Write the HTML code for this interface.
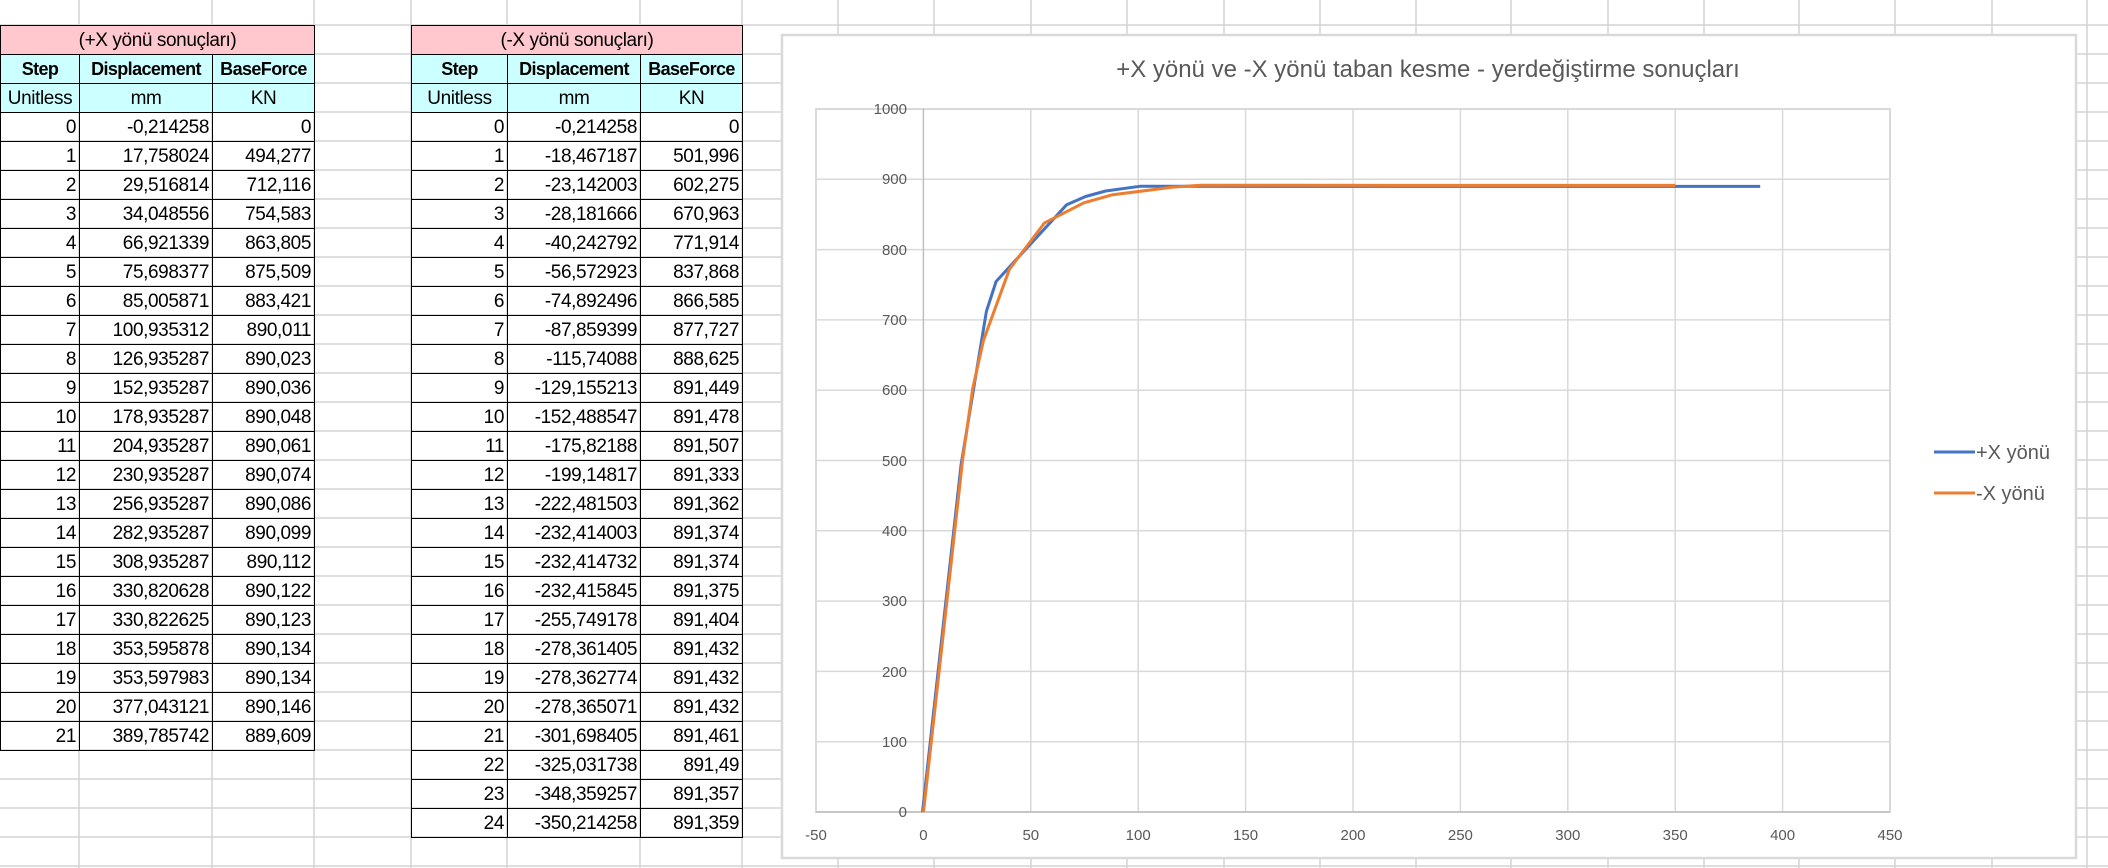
<!DOCTYPE html>
<html><head><meta charset="utf-8"><style>
*{margin:0;padding:0;box-sizing:border-box}
body{width:2108px;height:868px;overflow:hidden;background:#fff;position:relative;font-family:"Liberation Sans",sans-serif}
table{position:absolute;top:25px;border-collapse:collapse;table-layout:fixed}
td{height:29px;border:1px solid #000;font-size:19px;letter-spacing:-0.4px;line-height:27px;text-align:right;padding:0 3px;white-space:nowrap;overflow:hidden;color:#000}
tr.h td{text-align:center;background:#ccffff}
tr.t td{text-align:center;background:#ffc7ce}
tr.b td{font-weight:bold;font-size:18px;letter-spacing:-0.6px;padding:0 1px}
</style></head><body>
<svg width="2108" height="868" style="position:absolute;left:0;top:0">
<g stroke="#d4d4d4" stroke-width="1.5">
<line x1="79" y1="0" x2="79" y2="868"/><line x1="212" y1="0" x2="212" y2="868"/><line x1="314" y1="0" x2="314" y2="868"/><line x1="411" y1="0" x2="411" y2="868"/><line x1="507" y1="0" x2="507" y2="868"/><line x1="640" y1="0" x2="640" y2="868"/><line x1="742" y1="0" x2="742" y2="868"/>
<line x1="838" y1="0" x2="838" y2="868"/><line x1="934" y1="0" x2="934" y2="868"/><line x1="1031" y1="0" x2="1031" y2="868"/><line x1="1127" y1="0" x2="1127" y2="868"/><line x1="1224" y1="0" x2="1224" y2="868"/><line x1="1320" y1="0" x2="1320" y2="868"/><line x1="1416" y1="0" x2="1416" y2="868"/><line x1="1511" y1="0" x2="1511" y2="868"/><line x1="1608" y1="0" x2="1608" y2="868"/><line x1="1704" y1="0" x2="1704" y2="868"/><line x1="1799" y1="0" x2="1799" y2="868"/><line x1="1895" y1="0" x2="1895" y2="868"/><line x1="1992" y1="0" x2="1992" y2="868"/><line x1="2087" y1="0" x2="2087" y2="868"/>
<line x1="0" y1="25" x2="2108" y2="25"/><line x1="0" y1="54" x2="2108" y2="54"/><line x1="0" y1="83" x2="2108" y2="83"/><line x1="0" y1="112" x2="2108" y2="112"/><line x1="0" y1="141" x2="2108" y2="141"/><line x1="0" y1="170" x2="2108" y2="170"/><line x1="0" y1="199" x2="2108" y2="199"/><line x1="0" y1="228" x2="2108" y2="228"/><line x1="0" y1="257" x2="2108" y2="257"/><line x1="0" y1="286" x2="2108" y2="286"/><line x1="0" y1="315" x2="2108" y2="315"/><line x1="0" y1="344" x2="2108" y2="344"/><line x1="0" y1="373" x2="2108" y2="373"/><line x1="0" y1="402" x2="2108" y2="402"/><line x1="0" y1="431" x2="2108" y2="431"/><line x1="0" y1="460" x2="2108" y2="460"/><line x1="0" y1="489" x2="2108" y2="489"/><line x1="0" y1="518" x2="2108" y2="518"/><line x1="0" y1="547" x2="2108" y2="547"/><line x1="0" y1="576" x2="2108" y2="576"/><line x1="0" y1="605" x2="2108" y2="605"/><line x1="0" y1="634" x2="2108" y2="634"/><line x1="0" y1="663" x2="2108" y2="663"/><line x1="0" y1="692" x2="2108" y2="692"/><line x1="0" y1="721" x2="2108" y2="721"/><line x1="0" y1="750" x2="2108" y2="750"/><line x1="0" y1="779" x2="2108" y2="779"/><line x1="0" y1="808" x2="2108" y2="808"/><line x1="0" y1="837" x2="2108" y2="837"/><line x1="0" y1="866" x2="2108" y2="866"/>
</g>
<rect x="782" y="35" width="1294" height="823" fill="#fff" stroke="#d9d9d9" stroke-width="2.5"/>
<text x="1428" y="77" text-anchor="middle" font-family="Liberation Sans, sans-serif" font-size="24" fill="#595959">+X yönü ve -X yönü taban kesme - yerdeğiştirme sonuçları</text>
<g stroke="#d9d9d9" stroke-width="1.5">
<line x1="1030.8" y1="109" x2="1030.8" y2="812"/><line x1="1138.2" y1="109" x2="1138.2" y2="812"/><line x1="1245.6" y1="109" x2="1245.6" y2="812"/><line x1="1353" y1="109" x2="1353" y2="812"/><line x1="1460.4" y1="109" x2="1460.4" y2="812"/><line x1="1567.8" y1="109" x2="1567.8" y2="812"/><line x1="1675.2" y1="109" x2="1675.2" y2="812"/><line x1="1782.6" y1="109" x2="1782.6" y2="812"/>
<line x1="816" y1="179.3" x2="1890" y2="179.3"/><line x1="816" y1="249.6" x2="1890" y2="249.6"/><line x1="816" y1="319.9" x2="1890" y2="319.9"/><line x1="816" y1="390.2" x2="1890" y2="390.2"/><line x1="816" y1="460.5" x2="1890" y2="460.5"/><line x1="816" y1="530.8" x2="1890" y2="530.8"/><line x1="816" y1="601.1" x2="1890" y2="601.1"/><line x1="816" y1="671.4" x2="1890" y2="671.4"/><line x1="816" y1="741.7" x2="1890" y2="741.7"/>
<rect x="816" y="109" width="1074" height="703" fill="none" stroke-width="2"/>
</g>
<line x1="923.4" y1="109" x2="923.4" y2="812" stroke="#bfbfbf" stroke-width="1.5"/>
<line x1="816" y1="812" x2="1890" y2="812" stroke="#bfbfbf" stroke-width="1.5"/>
<g font-family="Liberation Sans, sans-serif" font-size="15" fill="#595959" text-anchor="end">
<text x="907" y="114">1000</text><text x="907" y="184">900</text><text x="907" y="255">800</text><text x="907" y="325">700</text><text x="907" y="395">600</text><text x="907" y="466">500</text><text x="907" y="536">400</text><text x="907" y="606">300</text><text x="907" y="677">200</text><text x="907" y="747">100</text><text x="907" y="817">0</text>
</g>
<g font-family="Liberation Sans, sans-serif" font-size="15" fill="#595959" text-anchor="middle">
<text x="816" y="840">-50</text><text x="923.4" y="840">0</text><text x="1030.8" y="840">50</text><text x="1138.2" y="840">100</text><text x="1245.6" y="840">150</text><text x="1353" y="840">200</text><text x="1460.4" y="840">250</text><text x="1567.8" y="840">300</text><text x="1675.2" y="840">350</text><text x="1782.6" y="840">400</text><text x="1890" y="840">450</text>
</g>
<polyline fill="none" stroke="#4472c4" stroke-width="3" stroke-linejoin="round" points="922.5,812 961.1,464.5 986.4,311.4 996.1,281.5 1066.7,204.7 1085.6,196.5 1105.6,191 1139.8,186.3 1760.2,186.4"/>
<polyline fill="none" stroke="#ed7d31" stroke-width="3" stroke-linejoin="round" points="923.5,812 962.7,459.1 972.7,388.6 983.5,340.3 1009.4,269.3 1044.5,222.9 1083.9,202.8 1111.7,194.9 1171.6,187.3 1200.4,185.3 1300.7,185.3 1675.2,185.4"/>
<line x1="1934" y1="452" x2="1975" y2="452" stroke="#4472c4" stroke-width="3"/>
<line x1="1934" y1="493" x2="1975" y2="493" stroke="#ed7d31" stroke-width="3"/>
<g font-family="Liberation Sans, sans-serif" font-size="20" fill="#595959">
<text x="1976" y="459">+X yönü</text><text x="1976" y="500">-X yönü</text>
</g>
</svg>

<table style="left:0;width:314px">
<colgroup><col style="width:79px"><col style="width:133px"><col style="width:102px"></colgroup>
<tr class="t"><td colspan="3">(+X yönü sonuçları)</td></tr>
<tr class="h b"><td>Step</td><td>Displacement</td><td>BaseForce</td></tr>
<tr class="h"><td>Unitless</td><td>mm</td><td>KN</td></tr>
<tr><td>0</td><td>-0,214258</td><td>0</td></tr>
<tr><td>1</td><td>17,758024</td><td>494,277</td></tr>
<tr><td>2</td><td>29,516814</td><td>712,116</td></tr>
<tr><td>3</td><td>34,048556</td><td>754,583</td></tr>
<tr><td>4</td><td>66,921339</td><td>863,805</td></tr>
<tr><td>5</td><td>75,698377</td><td>875,509</td></tr>
<tr><td>6</td><td>85,005871</td><td>883,421</td></tr>
<tr><td>7</td><td>100,935312</td><td>890,011</td></tr>
<tr><td>8</td><td>126,935287</td><td>890,023</td></tr>
<tr><td>9</td><td>152,935287</td><td>890,036</td></tr>
<tr><td>10</td><td>178,935287</td><td>890,048</td></tr>
<tr><td>11</td><td>204,935287</td><td>890,061</td></tr>
<tr><td>12</td><td>230,935287</td><td>890,074</td></tr>
<tr><td>13</td><td>256,935287</td><td>890,086</td></tr>
<tr><td>14</td><td>282,935287</td><td>890,099</td></tr>
<tr><td>15</td><td>308,935287</td><td>890,112</td></tr>
<tr><td>16</td><td>330,820628</td><td>890,122</td></tr>
<tr><td>17</td><td>330,822625</td><td>890,123</td></tr>
<tr><td>18</td><td>353,595878</td><td>890,134</td></tr>
<tr><td>19</td><td>353,597983</td><td>890,134</td></tr>
<tr><td>20</td><td>377,043121</td><td>890,146</td></tr>
<tr><td>21</td><td>389,785742</td><td>889,609</td></tr>
</table>

<table style="left:411px;width:331px">
<colgroup><col style="width:96px"><col style="width:133px"><col style="width:102px"></colgroup>
<tr class="t"><td colspan="3">(-X yönü sonuçları)</td></tr>
<tr class="h b"><td>Step</td><td>Displacement</td><td>BaseForce</td></tr>
<tr class="h"><td>Unitless</td><td>mm</td><td>KN</td></tr>
<tr><td>0</td><td>-0,214258</td><td>0</td></tr>
<tr><td>1</td><td>-18,467187</td><td>501,996</td></tr>
<tr><td>2</td><td>-23,142003</td><td>602,275</td></tr>
<tr><td>3</td><td>-28,181666</td><td>670,963</td></tr>
<tr><td>4</td><td>-40,242792</td><td>771,914</td></tr>
<tr><td>5</td><td>-56,572923</td><td>837,868</td></tr>
<tr><td>6</td><td>-74,892496</td><td>866,585</td></tr>
<tr><td>7</td><td>-87,859399</td><td>877,727</td></tr>
<tr><td>8</td><td>-115,74088</td><td>888,625</td></tr>
<tr><td>9</td><td>-129,155213</td><td>891,449</td></tr>
<tr><td>10</td><td>-152,488547</td><td>891,478</td></tr>
<tr><td>11</td><td>-175,82188</td><td>891,507</td></tr>
<tr><td>12</td><td>-199,14817</td><td>891,333</td></tr>
<tr><td>13</td><td>-222,481503</td><td>891,362</td></tr>
<tr><td>14</td><td>-232,414003</td><td>891,374</td></tr>
<tr><td>15</td><td>-232,414732</td><td>891,374</td></tr>
<tr><td>16</td><td>-232,415845</td><td>891,375</td></tr>
<tr><td>17</td><td>-255,749178</td><td>891,404</td></tr>
<tr><td>18</td><td>-278,361405</td><td>891,432</td></tr>
<tr><td>19</td><td>-278,362774</td><td>891,432</td></tr>
<tr><td>20</td><td>-278,365071</td><td>891,432</td></tr>
<tr><td>21</td><td>-301,698405</td><td>891,461</td></tr>
<tr><td>22</td><td>-325,031738</td><td>891,49</td></tr>
<tr><td>23</td><td>-348,359257</td><td>891,357</td></tr>
<tr><td>24</td><td>-350,214258</td><td>891,359</td></tr>
</table>
</body></html>
